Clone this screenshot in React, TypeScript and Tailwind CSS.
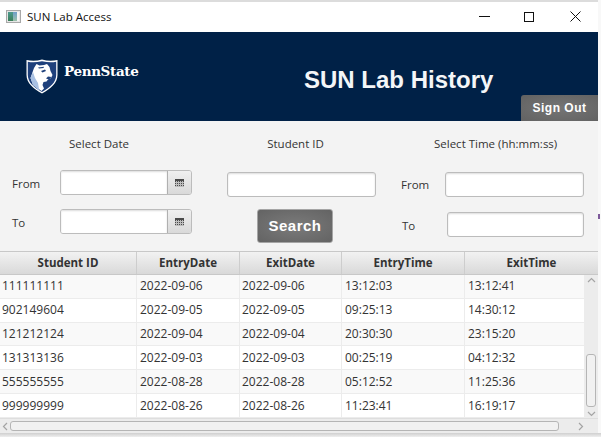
const rows = [
  ['111111111', '2022-09-06', '2022-09-06', '13:12:03', '13:12:41'],
  ['902149604', '2022-09-05', '2022-09-05', '09:25:13', '14:30:12'],
  ['121212124', '2022-09-04', '2022-09-04', '20:30:30', '23:15:20'],
  ['131313136', '2022-09-03', '2022-09-03', '00:25:19', '04:12:32'],
  ['555555555', '2022-08-28', '2022-08-28', '05:12:52', '11:25:36'],
  ['999999999', '2022-08-26', '2022-08-26', '11:23:41', '16:19:17'],
];

const headers = [
  { label: 'Student ID', width: 'w-[137px]' },
  { label: 'EntryDate', width: 'w-[103px]' },
  { label: 'ExitDate', width: 'w-[102px]' },
  { label: 'EntryTime', width: 'w-[123px]' },
  { label: 'ExitTime', width: 'w-[133px]' },
];

const cellWidths = ['w-[137px] pl-[2px]', 'w-[103px] pl-[3px]', 'w-[102px] pl-[2px]', 'w-[123px] pl-[3px]', 'w-[119px] pl-[3px]'];

const inputClass =
  'block h-[25px] rounded-[3px] border border-[#bcbcbc] bg-white shadow-[inset_0_1px_2px_rgba(0,0,0,0.14)] outline-none';

function Shield() {
  return (
    <svg width="32" height="35" viewBox="0 0 32 35" className="shrink-0">
      <path d="M16 .6C21 2 26.500 2.200 31.500 1v15c0 8-7 14-15.500 18.500C7.500 30 .5 24 .5 16V1C5.500 2.200 11 2 16 .6Z" fill="#fff" />
      <path d="M16 2.200C21 3.500 26 3.700 30.200 2.800V16c0 7.200-6.200 12.600-14.200 17C8 28.600 1.800 23.200 1.800 16V2.800C6 3.700 11 3.500 16 2.200Z" fill="#1e407c" />
      <path d="M8 9l2.500-4 3 1.500 4.500-.5 3-1 2.500 3 1 4 2 4-1.500 3-3 1.500-1.500 2-3 .5-1 3 1.500 3.500-2.500 2.500L7 26 4.500 19Z" fill="#fff" />
      <path d="M4.500 19 7 13l2 6 3 5 1 6 1 2.500L7 26Z" fill="#a9c1e3" />
      <path d="M15 12l4-1.500 1 1.500-3.500 1.500ZM22 17.500l3.500.5-2.500 2.500-3-1ZM12 8.500l6-.8-.5 1.300-4.500.5Z" fill="#1e407c" />
    </svg>
  );
}

function WindowIcon() {
  return (
    <div className="flex h-[13px] w-[15px] border border-[#a8a8a8] bg-[#e6e6e6] p-px">
      <div className="w-[5px] bg-gradient-to-b from-[#4d9a8e] to-[#3a7f5a]" />
      <div className="w-[4px] bg-gradient-to-b from-[#6f9ec9] to-[#9bc0a8]" />
      <div className="flex-1 bg-[#f4f4f4]" />
    </div>
  );
}

function CalendarIcon() {
  return (
    <svg width="9" height="8" viewBox="0 0 9 8">
      <rect width="9" height="8" fill="#4a4a4a" />
      {[1, 3, 5, 7].map((x) => (
        <rect key={x} x={x} y="2" width="1" height="6" fill="#bdbdbd" />
      ))}
      {[3, 5, 7].map((y) => (
        <rect key={y} x="0" y={y} width="9" height="1" fill="#bdbdbd" />
      ))}
    </svg>
  );
}

function DateField() {
  return (
    <div className="flex h-[25px] w-[132px] overflow-hidden rounded-[3px] border border-[#bcbcbc]">
      <input className="h-full w-[107px] border-r border-[#b0b0b0] bg-white shadow-[inset_0_1px_2px_rgba(0,0,0,0.14)] outline-none" />
      <div className="flex flex-1 items-center justify-center bg-gradient-to-b from-[#f0f0f0] to-[#d9d9d9]">
        <CalendarIcon />
      </div>
    </div>
  );
}

function Chevron({ d }: { d: string }) {
  return (
    <svg width="9" height="9" viewBox="0 0 9 9" fill="none" stroke="#a4a4a4" strokeWidth="1.200">
      <path d={d} />
    </svg>
  );
}

export default function App() {
  return (
    <div className="relative flex h-[437px] w-[601px] flex-col overflow-hidden bg-[#f8f8f8] font-['Open_Sans',sans-serif] text-[11.500px] text-[#333]">
      <div className="w-[598px] flex-1 border-t-2 border-[#dcdcdc] bg-[#f3f3f3] flex flex-col">
        {/* title bar */}
        <div className="flex h-[30px] shrink-0 items-center bg-white pl-[6px] pb-px">
          <WindowIcon />
          <span className="ml-[6px] text-[#111]">SUN Lab Access</span>
          <div className="ml-auto flex items-center pr-[17px]">
            <svg width="11" height="11" viewBox="0 0 11 11" stroke="#111" fill="none">
              <path d="M0 5.500h11" />
            </svg>
            <svg width="10" height="10" viewBox="0 0 10 10" stroke="#111" fill="none" className="ml-[34px]">
              <rect x=".5" y=".5" width="9" height="9" />
            </svg>
            <svg width="11" height="11" viewBox="0 0 11 11" stroke="#111" fill="none" className="ml-[36px]">
              <path d="M.5.500l10 10M10.500.500l-10 10" />
            </svg>
          </div>
        </div>

        {/* banner */}
        <div className="flex h-[89px] shrink-0 bg-[#002147]">
          <div className="ml-[26px] mt-[27px] flex h-[35px] w-[113px] items-center">
            <Shield />
            <span className="ml-[6px] -mt-[9px] font-['DejaVu_Serif',serif] text-[13.500px] font-bold leading-none tracking-[-0.35px] text-white">
              PennState
            </span>
          </div>
          <h1 className="ml-[165px] mt-[34px] h-[28px] font-['Liberation_Sans',sans-serif] text-[24px] font-bold leading-[28px] text-[#f4f6f8]">
            SUN Lab History
          </h1>
          <button className="ml-auto mt-[63px] h-[26px] w-[77px] rounded-tl-[3px] bg-[radial-gradient(ellipse_at_center,#757575,#626262)] font-['Liberation_Sans',sans-serif] text-[12px] font-bold tracking-[0.5px] text-white">
            Sign Out
          </button>
        </div>

        {/* search form */}
        <div className="flex h-[130px] shrink-0">
          <div className="ml-[12px] w-[180px]">
            <p className="mt-[14px] pl-[57px] leading-[18px]">Select Date</p>
            <div className="mt-[17px] flex items-center">
              <span className="w-[48px] pt-[2px]">From</span>
              <DateField />
            </div>
            <div className="mt-[14px] flex items-center">
              <span className="w-[48px] pt-[2px]">To</span>
              <DateField />
            </div>
          </div>
          <div className="ml-[35px] w-[149px]">
            <p className="mt-[14px] pr-[12px] text-center leading-[18px]">Student ID</p>
            <input className={`${inputClass} mt-[19px] w-[149px]`} />
            <button className="ml-[30px] mt-[12px] h-[34px] w-[76px] rounded-[3px] border border-[#a5a5a5] bg-[radial-gradient(ellipse_at_center,#7b7b7b,#636363)] font-['Liberation_Sans',sans-serif] text-[15px] font-bold tracking-[0.5px] text-white">
              Search
            </button>
          </div>
          <div className="ml-[25px] w-[183px]">
            <p className="mt-[14px] pl-[33px] leading-[18px] whitespace-nowrap">Select Time (hh:mm:ss)</p>
            <div className="mt-[19px] flex items-center">
              <span className="w-[44px]">From</span>
              <input className={`${inputClass} w-[139px]`} />
            </div>
            <div className="mt-[15px] flex items-center">
              <span className="ml-px w-[45px] pt-[2px]">To</span>
              <input className={`${inputClass} w-[137px]`} />
            </div>
          </div>
        </div>

        {/* table */}
        <div className="flex h-[24px] shrink-0 border-y border-[#c8c8c8] bg-gradient-to-b from-[#f2f2f2] to-[#d9d9d9]">
          {headers.map((h) => (
            <div
              key={h.label}
              className={`${h.width} flex items-center justify-center border-r border-[#cdcdcd] font-bold text-[#333] last:border-r-0`}
            >
              {h.label}
            </div>
          ))}
        </div>
        <div className="flex h-[143px] shrink-0">
          <div className="w-[584px] text-[12px]">
            {rows.map((row, i) => (
              <div
                key={row[0]}
                className={`flex h-[23.830px] border-b border-[#ececec] ${i % 2 === 0 ? 'bg-[#f9f9f9]' : 'bg-white'}`}
              >
                {row.map((value, j) => (
                  <div key={j} className={`${cellWidths[j]} flex items-center border-r border-[#ececec] last:border-r-0`}>
                    {value}
                  </div>
                ))}
              </div>
            ))}
          </div>
          <div className="flex w-[14px] flex-col items-center bg-[#ececec] pt-px">
            <Chevron d="M1 6l3.500-3.500L8 6" />
            <div className="mt-auto mb-[2px] h-[53px] w-[10px] rounded-[3px] border border-[#b5b5b5] bg-[#f1f1f1]" />
            <Chevron d="M1 3l3.500 3.500L8 3" />
          </div>
        </div>
        <div className="flex h-[15px] shrink-0 items-center bg-[#ececec] border-t border-[#dedede]">
          <div className="w-[10px] pl-px">
            <Chevron d="M6 1L2.500 4.500 6 8" />
          </div>
          <div className="h-[10px] w-[549px] rounded-[3px] border border-[#b5b5b5] bg-[#f1f1f1]" />
          <div className="ml-[17px]">
            <Chevron d="M3 1l3.500 3.500L3 8" />
          </div>
        </div>
      </div>
      <div className="h-[5px] w-full shrink-0 bg-gradient-to-b from-[#cfcfcf] to-[#f6f6f6]" />
      <div className="absolute left-[598px] top-[214px] h-[5px] w-[2px] bg-[#7d5a9a]" />
    </div>
  );
}
